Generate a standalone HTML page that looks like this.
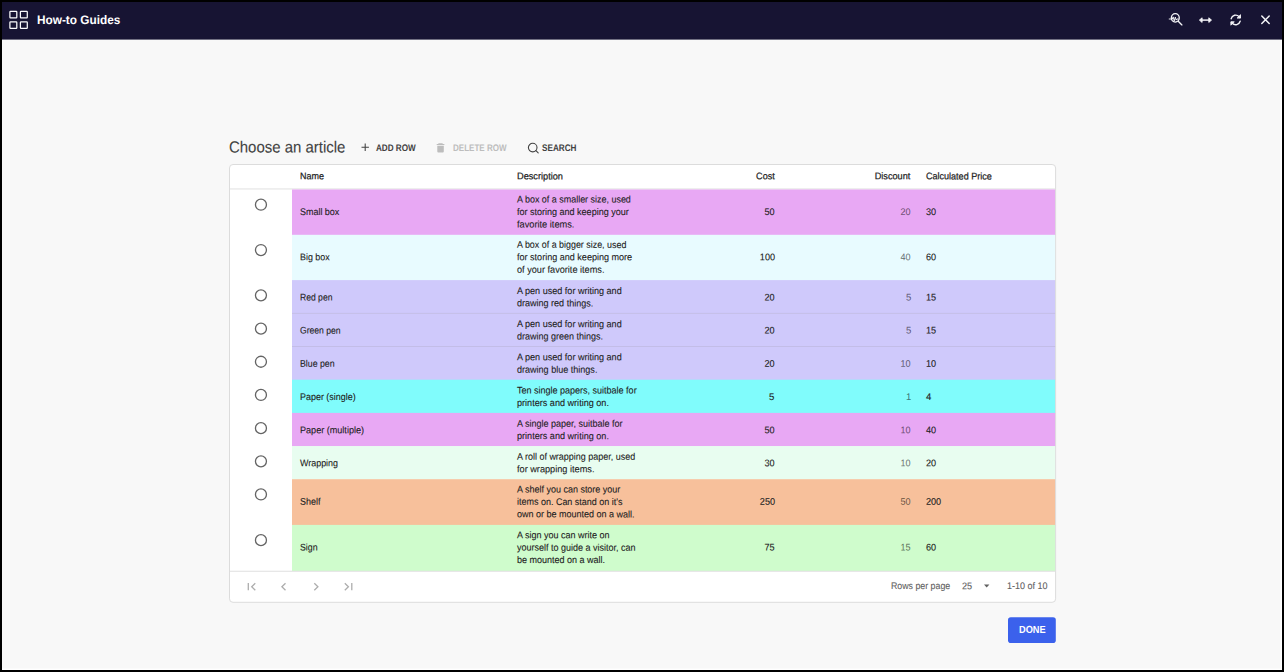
<!DOCTYPE html>
<html><head><meta charset="utf-8"><title>How-to Guides</title>
<style>
html,body{margin:0;padding:0}
body{width:1284px;height:672px;background:#000;position:relative;overflow:hidden;font-family:"Liberation Sans", sans-serif;}
.r{position:absolute;box-sizing:content-box}
.t{position:absolute;white-space:nowrap;font-family:"Liberation Sans", sans-serif;}
</style></head><body>
<div class="r" style="left:2px;top:2px;width:1280px;height:668px;background:#fff;"></div>
<svg class="r" style="left:0;top:0" width="1284" height="672" viewBox="0 0 1284 672"><rect x="2.00" y="39.90" width="1278.70" height="628.70" fill="#f8f8f8" /><rect x="2.00" y="2.00" width="1280.00" height="37.60" fill="#171433" /><rect x="229.50" y="164.50" width="826.10" height="437.80" fill="#fff" rx="3.5" stroke="#dcdcdc" stroke-width="1"/><rect x="230.00" y="188.45" width="825.10" height="1.00" fill="#e0e0e0" /><rect x="292.00" y="189.45" width="763.10" height="45.65" fill="#e8a8f4" /><rect x="292.00" y="234.80" width="763.10" height="45.60" fill="#e8fbff" /><rect x="292.00" y="280.10" width="763.10" height="33.60" fill="#cfc9fb" /><rect x="292.00" y="313.40" width="763.10" height="33.40" fill="#cfc9fb" /><rect x="292.00" y="346.50" width="763.10" height="33.50" fill="#cfc9fb" /><rect x="292.00" y="379.70" width="763.10" height="33.50" fill="#80fcfc" /><rect x="292.00" y="412.90" width="763.10" height="33.50" fill="#e8a8f4" /><rect x="292.00" y="446.10" width="763.10" height="33.40" fill="#e8fdf0" /><rect x="292.00" y="479.20" width="763.10" height="46.00" fill="#f7c09b" /><rect x="292.00" y="524.90" width="763.10" height="46.10" fill="#cffccc" /><circle cx="260.95" cy="204.70" r="5.5" fill="none" stroke="#646464" stroke-width="1.3"/><circle cx="260.95" cy="250.05" r="5.5" fill="none" stroke="#646464" stroke-width="1.3"/><circle cx="260.95" cy="295.35" r="5.5" fill="none" stroke="#646464" stroke-width="1.3"/><circle cx="260.95" cy="328.65" r="5.5" fill="none" stroke="#646464" stroke-width="1.3"/><circle cx="260.95" cy="361.75" r="5.5" fill="none" stroke="#646464" stroke-width="1.3"/><circle cx="260.95" cy="394.95" r="5.5" fill="none" stroke="#646464" stroke-width="1.3"/><circle cx="260.95" cy="428.15" r="5.5" fill="none" stroke="#646464" stroke-width="1.3"/><circle cx="260.95" cy="461.35" r="5.5" fill="none" stroke="#646464" stroke-width="1.3"/><circle cx="260.95" cy="494.45" r="5.5" fill="none" stroke="#646464" stroke-width="1.3"/><circle cx="260.95" cy="540.15" r="5.5" fill="none" stroke="#646464" stroke-width="1.3"/><rect x="292.00" y="312.90" width="763.10" height="1.00" fill="rgba(0,0,0,0.08)" /><rect x="292.00" y="346.00" width="763.10" height="1.00" fill="rgba(0,0,0,0.08)" /><rect x="230.00" y="570.75" width="825.10" height="1.00" fill="#e0e0e0" /><rect x="1008.00" y="617.20" width="47.80" height="25.80" fill="#3b61ec" rx="2.8"/></svg>
<svg class="r" style="left:8px;top:9px" width="22" height="22" viewBox="0 0 22 22" fill="none" stroke="#fafafc" stroke-width="1.25">
<rect x="1.9" y="2.3" width="6.9" height="6.5" rx="0.6"/><rect x="12.4" y="2.3" width="6.9" height="6.5" rx="0.6"/>
<rect x="1.9" y="12.9" width="6.9" height="6.5" rx="0.6"/><rect x="12.4" y="12.9" width="6.9" height="6.5" rx="0.6"/></svg>
<span class="t" id="title" style="top:12px;font-size:12.3px;line-height:14.76px;color:#ffffff;font-weight:bold;transform:translateY(0.96px) rotate(0.04deg) scaleX(0.9597);transform-origin:left center;left:36.95px;">How-to Guides</span>
<svg class="r" style="left:1166px;top:10px" width="20" height="20" viewBox="0 0 20 20" fill="none" stroke="#f4f4f7" stroke-width="1.35" stroke-linecap="round" stroke-linejoin="round">
<ellipse cx="9.3" cy="7.85" rx="3.95" ry="4.25"/><path d="M12.5 11.5 L15.9 14.9"/><path d="M3.2 9 H6.3 L7.2 6.9 L8.25 10.9 L9.3 7.1 L10.2 10.1 L10.9 9 H12" stroke-width="0.95"/></svg>
<svg class="r" style="left:1196px;top:12px" width="20" height="16" viewBox="0 0 20 16" fill="#f4f4f7" stroke="#f4f4f7" stroke-width="1.45" stroke-linejoin="round">
<path d="M5.6 8.1 H13.3" fill="none"/><path d="M3.4 8.1 L6.1 5.8 V10.4 Z" stroke-width="0.9"/><path d="M15.5 8.1 L12.8 5.8 V10.4 Z" stroke-width="0.9"/></svg>
<svg class="r" style="left:1226px;top:10px" width="20" height="20" viewBox="0 0 20 20" fill="none" stroke="#f4f4f7" stroke-width="1.45" stroke-linecap="round" stroke-linejoin="round">
<path d="M5.2 8.7 A4.6 4.6 0 0 1 13.1 6.7 L13.9 7.5"/><path d="M14.5 5.1 V8.1 H11.5 Z" fill="#f4f4f7" stroke-width="0.9"/>
<path d="M14.2 11.2 A4.6 4.6 0 0 1 6.3 13.2 L5.5 12.4"/><path d="M4.9 14.8 V11.8 H7.9 Z" fill="#f4f4f7" stroke-width="0.9"/></svg>
<svg class="r" style="left:1256px;top:10px" width="20" height="20" viewBox="0 0 20 20" fill="none" stroke="#f4f4f7" stroke-width="1.5" stroke-linecap="round">
<path d="M5.8 5.95 L13.2 13.55 M13.2 5.95 L5.8 13.55"/></svg>
<span class="t" id="choose" style="top:137px;font-size:16.0px;line-height:19.2px;color:#424242;-webkit-text-stroke:0.1px #424242;transform:translateY(0.46px) rotate(0.04deg) scaleX(0.9344);transform-origin:left center;left:229.45px;">Choose an article</span>
<svg class="r" style="left:360px;top:142.4px" width="10" height="10" viewBox="0 0 10 10" fill="none" stroke="#424242" stroke-width="1.05">
<path d="M5.2 1.5 V8.9 M1.5 5.2 H8.9"/></svg>
<span class="t" id="addrow" style="top:142px;font-size:9.6px;line-height:11.52px;color:#424242;font-weight:bold;transform:translateY(0.01px) rotate(0.04deg) scaleX(0.8475);transform-origin:left center;left:376.25px;">ADD ROW</span>
<svg class="r" style="left:435px;top:142px" width="12" height="12" viewBox="0 0 12 12" fill="#bdbdbd">
<path d="M3.6 1.3 H7.4 L7.9 1.9 H9.4 V3 H1.7 V1.9 H3.1 Z M2.3 3.7 H8.8 V9.6 Q8.8 10.6 7.8 10.6 H3.3 Q2.3 10.6 2.3 9.6 Z"/></svg>
<span class="t" id="delrow" style="top:142px;font-size:9.6px;line-height:11.52px;color:#bdbdbd;font-weight:bold;transform:translateY(0.01px) rotate(0.04deg) scaleX(0.8378);transform-origin:left center;left:452.85px;">DELETE ROW</span>
<svg class="r" style="left:526px;top:141px" width="14" height="14" viewBox="0 0 14 14" fill="none" stroke="#424242" stroke-width="1.1" stroke-linecap="round">
<circle cx="6.7" cy="6.6" r="4.3"/><path d="M9.9 9.7 L12.2 11.9"/></svg>
<span class="t" id="search" style="top:142px;font-size:9.6px;line-height:11.52px;color:#424242;font-weight:bold;transform:translateY(0.01px) rotate(0.04deg) scaleX(0.8500);transform-origin:left center;left:542.05px;">SEARCH</span>
<span class="t" id="h_name" style="top:170px;font-size:9.6px;line-height:11.52px;color:#212121;-webkit-text-stroke:0.22px #212121;transform:translateY(0.36px) rotate(0.04deg) scaleX(0.9341);transform-origin:left center;left:299.55px;">Name</span>
<span class="t" id="h_desc" style="top:170px;font-size:9.6px;line-height:11.52px;color:#212121;-webkit-text-stroke:0.22px #212121;transform:translateY(0.36px) rotate(0.04deg) scaleX(0.9577);transform-origin:left center;left:516.65px;">Description</span>
<span class="t" id="h_cost" style="top:170px;font-size:9.6px;line-height:11.52px;color:#212121;-webkit-text-stroke:0.22px #212121;transform:translateY(0.36px) rotate(0.04deg) scaleX(0.9438);transform-origin:right center;right:509.70px;">Cost</span>
<span class="t" id="h_disc" style="top:170px;font-size:9.6px;line-height:11.52px;color:#212121;-webkit-text-stroke:0.22px #212121;transform:translateY(0.36px) rotate(0.04deg) scaleX(0.9544);transform-origin:right center;right:373.40px;">Discount</span>
<span class="t" id="h_calc" style="top:170px;font-size:9.6px;line-height:11.52px;color:#212121;-webkit-text-stroke:0.22px #212121;transform:translateY(0.36px) rotate(0.04deg) scaleX(0.9410);transform-origin:left center;left:926.05px;">Calculated Price</span>
<span class="t" id="n0" style="top:205px;font-size:9.6px;line-height:11.52px;color:#212121;-webkit-text-stroke:0.1px #212121;transform:translateY(0.94px) rotate(0.04deg) scaleX(0.9332);transform-origin:left center;left:299.60px;">Small box</span>
<span class="t" id="d0_0" style="top:193px;font-size:9.6px;line-height:11.52px;color:#212121;-webkit-text-stroke:0.1px #212121;transform:translateY(0.49px) rotate(0.04deg) scaleX(0.9322);transform-origin:left center;left:516.65px;">A box of a smaller size, used</span>
<span class="t" id="d0_1" style="top:205px;font-size:9.6px;line-height:11.52px;color:#212121;-webkit-text-stroke:0.1px #212121;transform:translateY(0.94px) rotate(0.04deg) scaleX(0.9392);transform-origin:left center;left:516.65px;">for storing and keeping your</span>
<span class="t" id="d0_2" style="top:218px;font-size:9.6px;line-height:11.52px;color:#212121;-webkit-text-stroke:0.1px #212121;transform:translateY(0.39px) rotate(0.04deg) scaleX(0.9610);transform-origin:left center;left:516.65px;">favorite items.</span>
<span class="t" id="c0" style="top:205px;font-size:9.6px;line-height:11.52px;color:#212121;-webkit-text-stroke:0.1px #212121;transform:translateY(0.94px) rotate(0.04deg) scaleX(0.9487);transform-origin:right center;right:509.30px;">50</span>
<span class="t" id="x0" style="top:205px;font-size:9.6px;line-height:11.52px;color:rgba(0,0,0,0.54);-webkit-text-stroke:0.1px rgba(0,0,0,0.54);transform:translateY(0.94px) rotate(0.04deg) scaleX(0.9487);transform-origin:right center;right:373.00px;">20</span>
<span class="t" id="p0" style="top:205px;font-size:9.6px;line-height:11.52px;color:#212121;-webkit-text-stroke:0.1px #212121;transform:translateY(0.94px) rotate(0.04deg) scaleX(0.9487);transform-origin:left center;left:926.15px;">30</span>
<span class="t" id="n1" style="top:251px;font-size:9.6px;line-height:11.52px;color:#212121;-webkit-text-stroke:0.1px #212121;transform:translateY(0.26px) rotate(0.04deg) scaleX(0.9268);transform-origin:left center;left:299.95px;">Big box</span>
<span class="t" id="d1_0" style="top:238px;font-size:9.6px;line-height:11.52px;color:#212121;-webkit-text-stroke:0.1px #212121;transform:translateY(0.81px) rotate(0.04deg) scaleX(0.9280);transform-origin:left center;left:516.65px;">A box of a bigger size, used</span>
<span class="t" id="d1_1" style="top:251px;font-size:9.6px;line-height:11.52px;color:#212121;-webkit-text-stroke:0.1px #212121;transform:translateY(0.26px) rotate(0.04deg) scaleX(0.9428);transform-origin:left center;left:516.65px;">for storing and keeping more</span>
<span class="t" id="d1_2" style="top:263px;font-size:9.6px;line-height:11.52px;color:#212121;-webkit-text-stroke:0.1px #212121;transform:translateY(0.71px) rotate(0.04deg) scaleX(0.9535);transform-origin:left center;left:516.65px;">of your favorite items.</span>
<span class="t" id="c1" style="top:251px;font-size:9.6px;line-height:11.52px;color:#212121;-webkit-text-stroke:0.1px #212121;transform:translateY(0.26px) rotate(0.04deg) scaleX(0.9483);transform-origin:right center;right:509.30px;">100</span>
<span class="t" id="x1" style="top:251px;font-size:9.6px;line-height:11.52px;color:rgba(0,0,0,0.54);-webkit-text-stroke:0.1px rgba(0,0,0,0.54);transform:translateY(0.26px) rotate(0.04deg) scaleX(0.9487);transform-origin:right center;right:373.00px;">40</span>
<span class="t" id="p1" style="top:251px;font-size:9.6px;line-height:11.52px;color:#212121;-webkit-text-stroke:0.1px #212121;transform:translateY(0.26px) rotate(0.04deg) scaleX(0.9487);transform-origin:left center;left:926.15px;">60</span>
<span class="t" id="n2" style="top:291px;font-size:9.6px;line-height:11.52px;color:#212121;-webkit-text-stroke:0.1px #212121;transform:translateY(0.41px) rotate(0.04deg) scaleX(0.8941);transform-origin:left center;left:299.95px;">Red pen</span>
<span class="t" id="d2_0" style="top:284px;font-size:9.6px;line-height:11.52px;color:#212121;-webkit-text-stroke:0.1px #212121;transform:translateY(0.89px) rotate(0.04deg) scaleX(0.9438);transform-origin:left center;left:516.65px;">A pen used for writing and</span>
<span class="t" id="d2_1" style="top:297px;font-size:9.6px;line-height:11.52px;color:#212121;-webkit-text-stroke:0.1px #212121;transform:translateY(0.34px) rotate(0.04deg) scaleX(0.9404);transform-origin:left center;left:516.65px;">drawing red things.</span>
<span class="t" id="c2" style="top:291px;font-size:9.6px;line-height:11.52px;color:#212121;-webkit-text-stroke:0.1px #212121;transform:translateY(0.41px) rotate(0.04deg) scaleX(0.9487);transform-origin:right center;right:509.30px;">20</span>
<span class="t" id="x2" style="top:291px;font-size:9.6px;line-height:11.52px;color:rgba(0,0,0,0.54);-webkit-text-stroke:0.1px rgba(0,0,0,0.54);transform:translateY(0.41px) rotate(0.04deg);transform-origin:right center;right:373.00px;">5</span>
<span class="t" id="p2" style="top:291px;font-size:9.6px;line-height:11.52px;color:#212121;-webkit-text-stroke:0.1px #212121;transform:translateY(0.41px) rotate(0.04deg) scaleX(0.9487);transform-origin:left center;left:926.15px;">15</span>
<span class="t" id="n3" style="top:324px;font-size:9.6px;line-height:11.52px;color:#212121;-webkit-text-stroke:0.1px #212121;transform:translateY(0.61px) rotate(0.04deg) scaleX(0.8963);transform-origin:left center;left:299.95px;">Green pen</span>
<span class="t" id="d3_0" style="top:318px;font-size:9.6px;line-height:11.52px;color:#212121;-webkit-text-stroke:0.1px #212121;transform:translateY(0.09px) rotate(0.04deg) scaleX(0.9438);transform-origin:left center;left:516.65px;">A pen used for writing and</span>
<span class="t" id="d3_1" style="top:330px;font-size:9.6px;line-height:11.52px;color:#212121;-webkit-text-stroke:0.1px #212121;transform:translateY(0.54px) rotate(0.04deg) scaleX(0.9370);transform-origin:left center;left:516.65px;">drawing green things.</span>
<span class="t" id="c3" style="top:324px;font-size:9.6px;line-height:11.52px;color:#212121;-webkit-text-stroke:0.1px #212121;transform:translateY(0.61px) rotate(0.04deg) scaleX(0.9487);transform-origin:right center;right:509.30px;">20</span>
<span class="t" id="x3" style="top:324px;font-size:9.6px;line-height:11.52px;color:rgba(0,0,0,0.54);-webkit-text-stroke:0.1px rgba(0,0,0,0.54);transform:translateY(0.61px) rotate(0.04deg);transform-origin:right center;right:373.00px;">5</span>
<span class="t" id="p3" style="top:324px;font-size:9.6px;line-height:11.52px;color:#212121;-webkit-text-stroke:0.1px #212121;transform:translateY(0.61px) rotate(0.04deg) scaleX(0.9487);transform-origin:left center;left:926.15px;">15</span>
<span class="t" id="n4" style="top:357px;font-size:9.6px;line-height:11.52px;color:#212121;-webkit-text-stroke:0.1px #212121;transform:translateY(0.76px) rotate(0.04deg) scaleX(0.9125);transform-origin:left center;left:299.95px;">Blue pen</span>
<span class="t" id="d4_0" style="top:351px;font-size:9.6px;line-height:11.52px;color:#212121;-webkit-text-stroke:0.1px #212121;transform:translateY(0.24px) rotate(0.04deg) scaleX(0.9438);transform-origin:left center;left:516.65px;">A pen used for writing and</span>
<span class="t" id="d4_1" style="top:363px;font-size:9.6px;line-height:11.52px;color:#212121;-webkit-text-stroke:0.1px #212121;transform:translateY(0.69px) rotate(0.04deg) scaleX(0.9421);transform-origin:left center;left:516.65px;">drawing blue things.</span>
<span class="t" id="c4" style="top:357px;font-size:9.6px;line-height:11.52px;color:#212121;-webkit-text-stroke:0.1px #212121;transform:translateY(0.76px) rotate(0.04deg) scaleX(0.9487);transform-origin:right center;right:509.30px;">20</span>
<span class="t" id="x4" style="top:357px;font-size:9.6px;line-height:11.52px;color:rgba(0,0,0,0.54);-webkit-text-stroke:0.1px rgba(0,0,0,0.54);transform:translateY(0.76px) rotate(0.04deg) scaleX(0.9487);transform-origin:right center;right:373.00px;">10</span>
<span class="t" id="p4" style="top:357px;font-size:9.6px;line-height:11.52px;color:#212121;-webkit-text-stroke:0.1px #212121;transform:translateY(0.76px) rotate(0.04deg) scaleX(0.9487);transform-origin:left center;left:926.15px;">10</span>
<span class="t" id="n5" style="top:390px;font-size:9.6px;line-height:11.52px;color:#212121;-webkit-text-stroke:0.1px #212121;transform:translateY(0.96px) rotate(0.04deg) scaleX(0.9320);transform-origin:left center;left:299.95px;">Paper (single)</span>
<span class="t" id="d5_0" style="top:384px;font-size:9.6px;line-height:11.52px;color:#212121;-webkit-text-stroke:0.1px #212121;transform:translateY(0.44px) rotate(0.04deg) scaleX(0.9386);transform-origin:left center;left:516.65px;">Ten single papers, suitbale for</span>
<span class="t" id="d5_1" style="top:396px;font-size:9.6px;line-height:11.52px;color:#212121;-webkit-text-stroke:0.1px #212121;transform:translateY(0.89px) rotate(0.04deg) scaleX(0.9474);transform-origin:left center;left:516.65px;">printers and writing on.</span>
<span class="t" id="c5" style="top:390px;font-size:9.6px;line-height:11.52px;color:#212121;-webkit-text-stroke:0.1px #212121;transform:translateY(0.96px) rotate(0.04deg);transform-origin:right center;right:509.30px;">5</span>
<span class="t" id="x5" style="top:390px;font-size:9.6px;line-height:11.52px;color:rgba(0,0,0,0.54);-webkit-text-stroke:0.1px rgba(0,0,0,0.54);transform:translateY(0.96px) rotate(0.04deg);transform-origin:right center;right:373.00px;">1</span>
<span class="t" id="p5" style="top:390px;font-size:9.6px;line-height:11.52px;color:#212121;-webkit-text-stroke:0.1px #212121;transform:translateY(0.96px) rotate(0.04deg);transform-origin:left center;left:926.15px;">4</span>
<span class="t" id="n6" style="top:424px;font-size:9.6px;line-height:11.52px;color:#212121;-webkit-text-stroke:0.1px #212121;transform:translateY(0.16px) rotate(0.04deg) scaleX(0.9458);transform-origin:left center;left:299.95px;">Paper (multiple)</span>
<span class="t" id="d6_0" style="top:417px;font-size:9.6px;line-height:11.52px;color:#212121;-webkit-text-stroke:0.1px #212121;transform:translateY(0.64px) rotate(0.04deg) scaleX(0.9386);transform-origin:left center;left:516.65px;">A single paper, suitbale for</span>
<span class="t" id="d6_1" style="top:430px;font-size:9.6px;line-height:11.52px;color:#212121;-webkit-text-stroke:0.1px #212121;transform:translateY(0.09px) rotate(0.04deg) scaleX(0.9474);transform-origin:left center;left:516.65px;">printers and writing on.</span>
<span class="t" id="c6" style="top:424px;font-size:9.6px;line-height:11.52px;color:#212121;-webkit-text-stroke:0.1px #212121;transform:translateY(0.16px) rotate(0.04deg) scaleX(0.9487);transform-origin:right center;right:509.30px;">50</span>
<span class="t" id="x6" style="top:424px;font-size:9.6px;line-height:11.52px;color:rgba(0,0,0,0.54);-webkit-text-stroke:0.1px rgba(0,0,0,0.54);transform:translateY(0.16px) rotate(0.04deg) scaleX(0.9487);transform-origin:right center;right:373.00px;">10</span>
<span class="t" id="p6" style="top:424px;font-size:9.6px;line-height:11.52px;color:#212121;-webkit-text-stroke:0.1px #212121;transform:translateY(0.16px) rotate(0.04deg) scaleX(0.9487);transform-origin:left center;left:926.15px;">40</span>
<span class="t" id="n7" style="top:457px;font-size:9.6px;line-height:11.52px;color:#212121;-webkit-text-stroke:0.1px #212121;transform:translateY(0.31px) rotate(0.04deg) scaleX(0.9289);transform-origin:left center;left:299.95px;">Wrapping</span>
<span class="t" id="d7_0" style="top:450px;font-size:9.6px;line-height:11.52px;color:#212121;-webkit-text-stroke:0.1px #212121;transform:translateY(0.79px) rotate(0.04deg) scaleX(0.9346);transform-origin:left center;left:516.65px;">A roll of wrapping paper, used</span>
<span class="t" id="d7_1" style="top:463px;font-size:9.6px;line-height:11.52px;color:#212121;-webkit-text-stroke:0.1px #212121;transform:translateY(0.24px) rotate(0.04deg) scaleX(0.9557);transform-origin:left center;left:516.65px;">for wrapping items.</span>
<span class="t" id="c7" style="top:457px;font-size:9.6px;line-height:11.52px;color:#212121;-webkit-text-stroke:0.1px #212121;transform:translateY(0.31px) rotate(0.04deg) scaleX(0.9487);transform-origin:right center;right:509.30px;">30</span>
<span class="t" id="x7" style="top:457px;font-size:9.6px;line-height:11.52px;color:rgba(0,0,0,0.54);-webkit-text-stroke:0.1px rgba(0,0,0,0.54);transform:translateY(0.31px) rotate(0.04deg) scaleX(0.9487);transform-origin:right center;right:373.00px;">10</span>
<span class="t" id="p7" style="top:457px;font-size:9.6px;line-height:11.52px;color:#212121;-webkit-text-stroke:0.1px #212121;transform:translateY(0.31px) rotate(0.04deg) scaleX(0.9487);transform-origin:left center;left:926.15px;">20</span>
<span class="t" id="n8" style="top:495px;font-size:9.6px;line-height:11.52px;color:#212121;-webkit-text-stroke:0.1px #212121;transform:translateY(0.86px) rotate(0.04deg) scaleX(0.9321);transform-origin:left center;left:299.60px;">Shelf</span>
<span class="t" id="d8_0" style="top:483px;font-size:9.6px;line-height:11.52px;color:#212121;-webkit-text-stroke:0.1px #212121;transform:translateY(0.41px) rotate(0.04deg) scaleX(0.9359);transform-origin:left center;left:516.65px;">A shelf you can store your</span>
<span class="t" id="d8_1" style="top:495px;font-size:9.6px;line-height:11.52px;color:#212121;-webkit-text-stroke:0.1px #212121;transform:translateY(0.86px) rotate(0.04deg) scaleX(0.9353);transform-origin:left center;left:516.65px;">items on. Can stand on it's</span>
<span class="t" id="d8_2" style="top:508px;font-size:9.6px;line-height:11.52px;color:#212121;-webkit-text-stroke:0.1px #212121;transform:translateY(0.31px) rotate(0.04deg) scaleX(0.9370);transform-origin:left center;left:516.65px;">own or be mounted on a wall.</span>
<span class="t" id="c8" style="top:495px;font-size:9.6px;line-height:11.52px;color:#212121;-webkit-text-stroke:0.1px #212121;transform:translateY(0.86px) rotate(0.04deg) scaleX(0.9483);transform-origin:right center;right:509.30px;">250</span>
<span class="t" id="x8" style="top:495px;font-size:9.6px;line-height:11.52px;color:rgba(0,0,0,0.54);-webkit-text-stroke:0.1px rgba(0,0,0,0.54);transform:translateY(0.86px) rotate(0.04deg) scaleX(0.9487);transform-origin:right center;right:373.00px;">50</span>
<span class="t" id="p8" style="top:495px;font-size:9.6px;line-height:11.52px;color:#212121;-webkit-text-stroke:0.1px #212121;transform:translateY(0.86px) rotate(0.04deg) scaleX(0.9483);transform-origin:left center;left:926.15px;">200</span>
<span class="t" id="n9" style="top:541px;font-size:9.6px;line-height:11.52px;color:#212121;-webkit-text-stroke:0.1px #212121;transform:translateY(0.61px) rotate(0.04deg) scaleX(0.9146);transform-origin:left center;left:299.60px;">Sign</span>
<span class="t" id="d9_0" style="top:529px;font-size:9.6px;line-height:11.52px;color:#212121;-webkit-text-stroke:0.1px #212121;transform:translateY(0.16px) rotate(0.04deg) scaleX(0.9382);transform-origin:left center;left:516.65px;">A sign you can write on</span>
<span class="t" id="d9_1" style="top:541px;font-size:9.6px;line-height:11.52px;color:#212121;-webkit-text-stroke:0.1px #212121;transform:translateY(0.61px) rotate(0.04deg) scaleX(0.9368);transform-origin:left center;left:516.65px;">yourself to guide a visitor, can</span>
<span class="t" id="d9_2" style="top:554px;font-size:9.6px;line-height:11.52px;color:#212121;-webkit-text-stroke:0.1px #212121;transform:translateY(0.06px) rotate(0.04deg) scaleX(0.9366);transform-origin:left center;left:516.65px;">be mounted on a wall.</span>
<span class="t" id="c9" style="top:541px;font-size:9.6px;line-height:11.52px;color:#212121;-webkit-text-stroke:0.1px #212121;transform:translateY(0.61px) rotate(0.04deg) scaleX(0.9487);transform-origin:right center;right:509.30px;">75</span>
<span class="t" id="x9" style="top:541px;font-size:9.6px;line-height:11.52px;color:rgba(0,0,0,0.54);-webkit-text-stroke:0.1px rgba(0,0,0,0.54);transform:translateY(0.61px) rotate(0.04deg) scaleX(0.9487);transform-origin:right center;right:373.00px;">15</span>
<span class="t" id="p9" style="top:541px;font-size:9.6px;line-height:11.52px;color:#212121;-webkit-text-stroke:0.1px #212121;transform:translateY(0.61px) rotate(0.04deg) scaleX(0.9487);transform-origin:left center;left:926.15px;">60</span>
<svg class="r" style="left:244px;top:579px" width="112" height="16" viewBox="0 0 112 16" fill="none" stroke="#adadad" stroke-width="1.3">
<path d="M4.3 4.1 V11.3 M11.3 4.2 L7.7 7.7 L11.3 11.2"/>
<path d="M41.5 4.2 L37.9 7.7 L41.5 11.2"/>
<path d="M70.3 4.2 L73.9 7.7 L70.3 11.2"/>
<path d="M100.8 4.2 L104.4 7.7 L100.8 11.2 M107.8 4.1 V11.3"/></svg>
<span class="t" id="f_rpp" style="top:579px;font-size:9.6px;line-height:11.52px;color:#616161;-webkit-text-stroke:0.1px #616161;transform:translateY(0.91px) rotate(0.04deg) scaleX(0.9174);transform-origin:left center;left:890.75px;">Rows per page</span>
<span class="t" id="f_25" style="top:580px;font-size:9.6px;line-height:11.52px;color:#616161;-webkit-text-stroke:0.1px #616161;transform:translateY(0.21px) rotate(0.04deg) scaleX(0.9487);transform-origin:left center;left:961.85px;">25</span>
<svg class="r" style="left:982px;top:582px" width="10" height="8" viewBox="0 0 10 8" fill="#616161"><path d="M2 2.4 H7.4 L4.7 5.4 Z"/></svg>
<span class="t" id="f_cnt" style="top:579px;font-size:9.6px;line-height:11.52px;color:#616161;-webkit-text-stroke:0.1px #616161;transform:translateY(0.91px) rotate(0.04deg) scaleX(0.9375);transform-origin:left center;left:1007.05px;">1-10 of 10</span>
<span class="t" id="done" style="top:624px;font-size:10.35px;line-height:12.42px;color:#fff;font-weight:bold;transform:translateY(0.05px) rotate(0.04deg) scaleX(0.8892);transform-origin:left center;left:1018.75px;">DONE</span>
</body></html>
